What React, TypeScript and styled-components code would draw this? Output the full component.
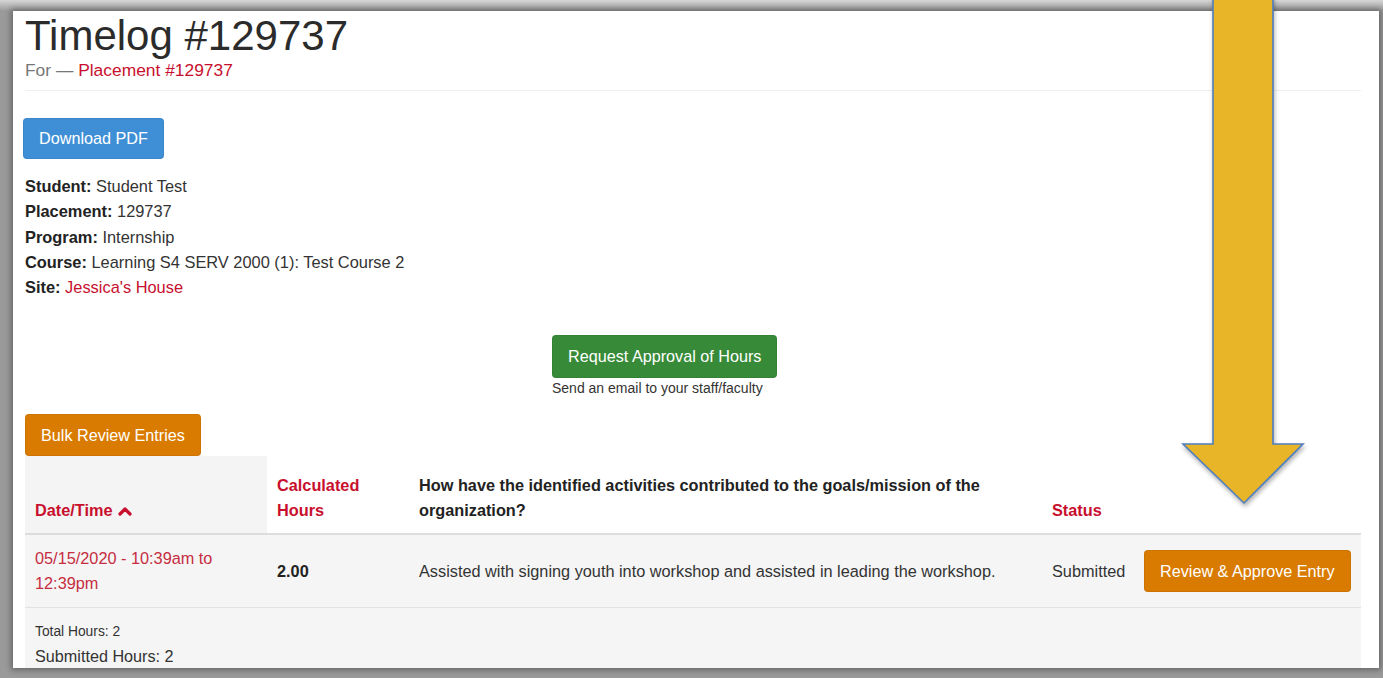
import styled, { createGlobalStyle } from "styled-components";

const GlobalStyle = createGlobalStyle`
  html, body {
    margin: 0;
    padding: 0;
    background: #b4b4b4;
  }
  body {
    font-family: "Liberation Sans", Arial, sans-serif;
    color: #333;
  }
`;

// LAYOUT
const Frame = styled.div`
  position: relative;
  box-sizing: border-box;
  height: 678px;
  padding: 11px 4px 10px 13px;
  overflow: hidden;
  background: linear-gradient(180deg, #d6d6d6 0px, #9a9a9a 11px, #9a9a9a 100%);
`;

const Sheet = styled.main`
  box-sizing: border-box;
  height: 657px;
  padding: 0 18px 0 12px;
  background: #fff;
  overflow: hidden;
  box-shadow: 0 0 6px 2px rgba(0, 0, 0, 0.35);
`;

const Title = styled.h1`
  margin: 3px 0 0;
  font-size: 42px;
  line-height: 43px;
  font-weight: 400;
  color: #2b2b2b;
`;

const Subtitle = styled.div`
  margin-top: 3px;
  font-size: 17.4px;
  line-height: 20px;
  color: #777;
`;

const RedLink = styled.a`
  color: #c8102e;
  text-decoration: none;
`;

const Rule = styled.hr`
  margin: 10px 0 0;
  border: 0;
  border-top: 1px solid #eee;
`;

const tones = {
  blue: "#3f8fd6",
  green: "#378a37",
  orange: "#d97b00",
};

const Button = styled.button<{ $tone: keyof typeof tones; $h?: number }>`
  display: inline-flex;
  align-items: center;
  height: ${(p) => p.$h ?? 42}px;
  padding: 0 15px;
  border: 1px solid rgba(0, 0, 0, 0.06);
  border-radius: 4px;
  background: ${(p) => tones[p.$tone]};
  color: #fff;
  font-family: "Liberation Sans", Arial, sans-serif;
  font-size: 16.2px;
  cursor: pointer;
`;

const DownloadRow = styled.div`
  margin: 27px 0 0 -2px;
`;

const Details = styled.div`
  margin-top: 15px;
  font-size: 16.4px;
  line-height: 25.3px;
`;

const Label = styled.b`
  font-weight: 700;
  color: #222;
`;

const Approval = styled.div`
  display: flex;
  flex-direction: column;
  align-items: flex-start;
  margin: 35px 0 0 527px;
`;

const Caption = styled.div`
  margin-top: 2px;
  font-size: 14px;
  line-height: 16px;
  color: #333;
`;

const BulkRow = styled.div`
  margin-top: 18px;
`;

// TABLE
const Table = styled.table`
  width: 1336px;
  table-layout: fixed;
  border-collapse: collapse;
  font-size: 16.3px;
  line-height: 25px;
`;

const HeadCell = styled.th<{ $shaded?: boolean; $sortable?: boolean }>`
  padding: 17px 10px 10px;
  text-align: left;
  vertical-align: bottom;
  font-weight: 700;
  color: ${(p) => (p.$sortable ? "#c8102e" : "#222")};
  background: ${(p) => (p.$shaded ? "#f4f4f4" : "#fff")};
  border-bottom: 2px solid #ddd;
`;

const Chevron = styled.svg`
  margin-left: 5px;
  vertical-align: 0px;
`;

const Row = styled.tr`
  background: #f5f5f5;
  border-bottom: 1px solid #e2e2e2;
`;

const Cell = styled.td<{ $bold?: boolean }>`
  padding: 11px 10px;
  vertical-align: middle;
  font-weight: ${(p) => (p.$bold ? 700 : 400)};
  color: ${(p) => (p.$bold ? "#222" : "#333")};
`;

const ActionCell = styled.td`
  padding: 0 9px;
  vertical-align: middle;
`;

const DateLink = styled.a`
  color: #c62d3f;
  text-decoration: none;
`;

const TotalsCell = styled.td`
  padding: 14px 10px 10px;
  background: #f5f5f5;
`;

const TotalLine = styled.div`
  font-size: 13.8px;
  line-height: 20px;
`;

const SubmittedLine = styled.div`
  margin-top: 2px;
  font-size: 16.2px;
  line-height: 25px;
`;

// Callout arrow laid over the page
const Callout = styled.svg`
  position: absolute;
  left: 1178px;
  top: -4px;
  filter: drop-shadow(1px 3px 2px rgba(0, 0, 0, 0.3));
  pointer-events: none;
`;

const details = [
  { label: "Student:", value: "Student Test" },
  { label: "Placement:", value: "129737" },
  { label: "Program:", value: "Internship" },
  { label: "Course:", value: "Learning S4 SERV 2000 (1): Test Course 2" },
];

export default function App() {
  return (
    <>
      <GlobalStyle />
      <Frame>
        <Sheet>
          <Title>Timelog #129737</Title>
          <Subtitle>
            For — <RedLink href="#">Placement #129737</RedLink>
          </Subtitle>
          <Rule />

          <DownloadRow>
            <Button $tone="blue" $h={41}>Download PDF</Button>
          </DownloadRow>

          <Details>
            {details.map((d) => (
              <div key={d.label}>
                <Label>{d.label}</Label> {d.value}
              </div>
            ))}
            <div>
              <Label>Site:</Label> <RedLink href="#">Jessica's House</RedLink>
            </div>
          </Details>

          <Approval>
            <Button $tone="green" $h={43}>Request Approval of Hours</Button>
            <Caption>Send an email to your staff/faculty</Caption>
          </Approval>

          <BulkRow>
            <Button $tone="orange">Bulk Review Entries</Button>
          </BulkRow>

          <Table>
            <colgroup>
              <col style={{ width: 242 }} />
              <col style={{ width: 142 }} />
              <col style={{ width: 633 }} />
              <col style={{ width: 93 }} />
              <col style={{ width: 226 }} />
            </colgroup>
            <thead>
              <tr>
                <HeadCell $shaded $sortable>
                  Date/Time
                  <Chevron width="14" height="10" viewBox="0 0 14 10">
                    <polyline
                      points="2,8 7,3 12,8"
                      fill="none"
                      stroke="#c8102e"
                      strokeWidth="3.2"
                      strokeLinecap="round"
                      strokeLinejoin="round"
                    />
                  </Chevron>
                </HeadCell>
                <HeadCell $sortable>
                  Calculated
                  <br />
                  Hours
                </HeadCell>
                <HeadCell>
                  How have the identified activities contributed to the goals/mission of the organization?
                </HeadCell>
                <HeadCell $sortable>Status</HeadCell>
                <HeadCell />
              </tr>
            </thead>
            <tbody>
              <Row>
                <Cell>
                  <DateLink href="#">
                    05/15/2020 - 10:39am to
                    <br />
                    12:39pm
                  </DateLink>
                </Cell>
                <Cell $bold>2.00</Cell>
                <Cell>Assisted with signing youth into workshop and assisted in leading the workshop.</Cell>
                <Cell>Submitted</Cell>
                <ActionCell>
                  <Button $tone="orange">Review &amp; Approve Entry</Button>
                </ActionCell>
              </Row>
              <tr>
                <TotalsCell colSpan={5}>
                  <TotalLine>Total Hours: 2</TotalLine>
                  <SubmittedLine>Submitted Hours: 2</SubmittedLine>
                </TotalsCell>
              </tr>
            </tbody>
          </Table>
        </Sheet>

        <Callout width="132" height="512" viewBox="0 0 132 512">
          <polygon
            points="35,0 95,0 95,448 125,448 66,507 5,448 35,448"
            fill="#e8b428"
            stroke="#4f7fbf"
            strokeWidth="1.6"
            strokeLinejoin="miter"
          />
        </Callout>
      </Frame>
    </>
  );
}
